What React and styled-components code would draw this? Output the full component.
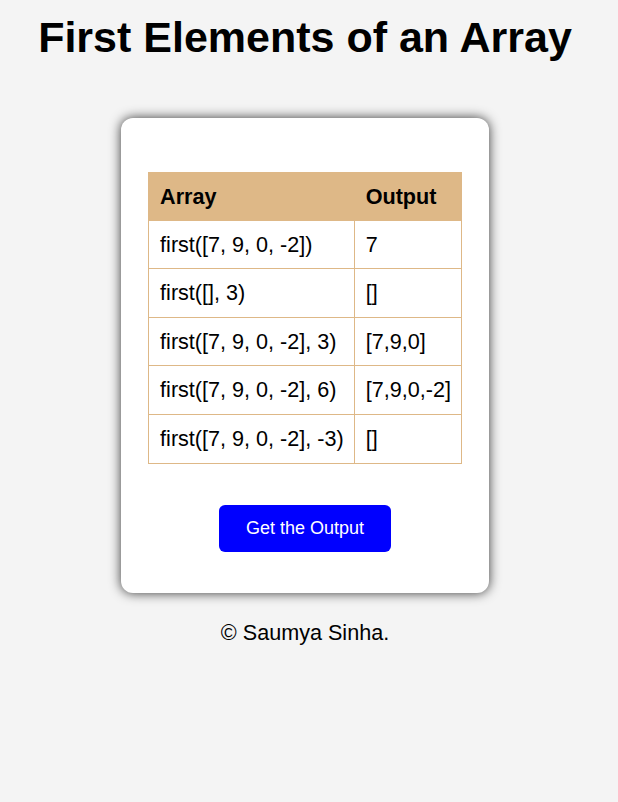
import React from "react";
import styled, { createGlobalStyle } from "styled-components";

const Global = createGlobalStyle`
  html, body {
    margin: 0;
    padding: 0;
    background: #f4f4f4;
    font-family: "Liberation Sans", Arial, sans-serif;
    color: #000;
  }
  body {
    margin-right: 8px;
    min-height: 802px;
  }
`;

const Page = styled.div`
  display: flex;
  flex-direction: column;
  align-items: center;
`;

const Title = styled.h1`
  margin: 13px 0 0;
  font-size: 43px;
  font-weight: bold;
  text-align: center;
`;

const Card = styled.div`
  margin-top: 56px;
  width: 368px;
  box-sizing: border-box;
  background: #fff;
  border-radius: 12px;
  box-shadow: 0 0 12px rgba(0, 0, 0, 0.78);
  padding: 54px 27px 41px;
  display: flex;
  flex-direction: column;
  align-items: center;
`;

const Table = styled.table`
  border-collapse: collapse;
  font-size: 21.6px;
  line-height: 25.6px;
`;

const HeadCell = styled.th`
  background: #deb887;
  border: 1px solid #deb887;
  text-align: left;
  font-weight: bold;
  padding: 11px 10px 10px 11px;
`;

const Cell = styled.td`
  border: 1px solid #deb887;
  padding: 11px 10px 11px 11px;
  white-space: nowrap;
`;

const Button = styled.button`
  margin-top: 41px;
  background: #0000ff;
  color: #fff;
  border: none;
  border-radius: 6px;
  font-family: "Liberation Sans", Arial, sans-serif;
  font-size: 18px;
  padding: 0;
  width: 172px;
  height: 47px;
  white-space: nowrap;
  cursor: pointer;
`;

const Footer = styled.p`
  margin: 27px 0 0;
  font-size: 21.6px;
`;

const rows = [
  ["first([7, 9, 0, -2])", "7"],
  ["first([], 3)", "[]"],
  ["first([7, 9, 0, -2], 3)", "[7,9,0]"],
  ["first([7, 9, 0, -2], 6)", "[7,9,0,-2]"],
  ["first([7, 9, 0, -2], -3)", "[]"],
];

export default function App() {
  return (
    <>
      <Global />
      <Page>
        <Title>First Elements of an Array</Title>
        <Card>
          <Table>
            <thead>
              <tr>
                <HeadCell>Array</HeadCell>
                <HeadCell>Output</HeadCell>
              </tr>
            </thead>
            <tbody>
              {rows.map(([a, b]) => (
                <tr key={a}>
                  <Cell>{a}</Cell>
                  <Cell>{b}</Cell>
                </tr>
              ))}
            </tbody>
          </Table>
          <Button>Get the Output</Button>
        </Card>
        <Footer>© Saumya Sinha.</Footer>
      </Page>
    </>
  );
}
